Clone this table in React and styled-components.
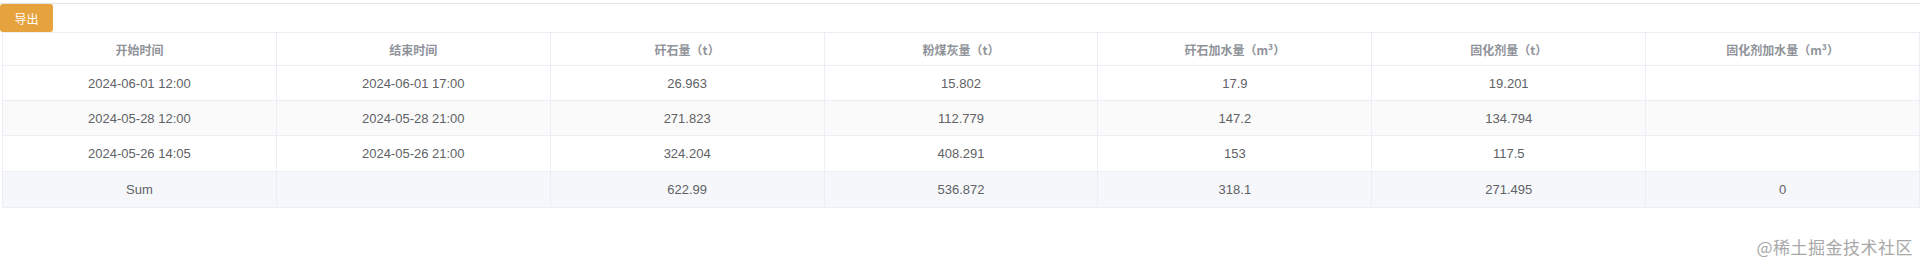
import React from "react";
import styled, { createGlobalStyle } from "styled-components";

const columns = [
  "开始时间",
  "结束时间",
  "矸石量（t）",
  "粉煤灰量（t）",
  "矸石加水量（m³）",
  "固化剂量（t）",
  "固化剂加水量（m³）",
];

const rows = [
  ["2024-06-01 12:00", "2024-06-01 17:00", "26.963", "15.802", "17.9", "19.201", ""],
  ["2024-05-28 12:00", "2024-05-28 21:00", "271.823", "112.779", "147.2", "134.794", ""],
  ["2024-05-26 14:05", "2024-05-26 21:00", "324.204", "408.291", "153", "117.5", ""],
];

const sum = ["Sum", "", "622.99", "536.872", "318.1", "271.495", "0"];

export default function App() {
  return (
    <>
      <GlobalStyle />
      <Page>
        <Toolbar>
          <ExportBtn>导出</ExportBtn>
        </Toolbar>
        <Table>
          <HeadRow>
            {columns.map((c) => (
              <HeadCell key={c}>{c}</HeadCell>
            ))}
          </HeadRow>
          {rows.map((r, i) => (
            <Row key={i} striped={i % 2 === 1} h={i === 2 ? 36 : 35}>
              {r.map((v, j) => (
                <Cell key={j}>{v}</Cell>
              ))}
            </Row>
          ))}
          <SumRow h={36}>
            {sum.map((v, j) => (
              <Cell key={j}>{v}</Cell>
            ))}
          </SumRow>
        </Table>
        <Watermark>@稀土掘金技术社区</Watermark>
      </Page>
    </>
  );
}

const GlobalStyle = createGlobalStyle`
  body {
    margin: 0;
    background: #fff;
    font-family: "Liberation Sans", "Noto Sans CJK SC", sans-serif;
  }
  * {
    box-sizing: border-box;
  }
`;

const Page = styled.div`
  position: relative;
  width: 1920px;
  height: 266px;
  padding-top: 3px;
  overflow: hidden;
`;

const Toolbar = styled.div`
  border-top: 1px solid #e4e4e4;
  display: flex;
`;

const ExportBtn = styled.button`
  width: 53px;
  height: 28px;
  border: none;
  border-radius: 3px;
  background: #e6a23c;
  color: #fff;
  font-size: 12px;
  font-family: "Noto Sans CJK SC", sans-serif;
  padding: 0;
  margin: 0;
`;

const Table = styled.div`
  margin-left: 2px;
  border-left: 1px solid #ebeef5;
  display: flex;
  flex-direction: column;
`;

const HeadRow = styled.div`
  display: grid;
  grid-template-columns: repeat(7, 1fr);
  height: 34px;
  border-top: 1px solid #ebeef5;
  border-bottom: 1px solid #ebeef5;
`;

const HeadCell = styled.div`
  display: flex;
  align-items: center;
  justify-content: center;
  border-right: 1px solid #ebeef5;
  color: #909399;
  font-weight: bold;
  font-size: 12px;
  font-family: "Noto Sans CJK SC", sans-serif;
`;

const Row = styled.div`
  display: grid;
  grid-template-columns: repeat(7, 1fr);
  height: ${(p) => p.h}px;
  border-bottom: 1px solid #ebeef5;
  background: ${(p) => (p.striped ? "#fafafa" : "#fff")};
`;

const SumRow = styled(Row)`
  background: #f5f7fa;
`;

const Cell = styled.div`
  display: flex;
  align-items: center;
  justify-content: center;
  border-right: 1px solid #ebeef5;
  color: #606266;
  font-size: 13px;
`;

const Watermark = styled.div`
  position: absolute;
  right: 7px;
  bottom: 7px;
  color: #a8a8a8;
  font-size: 17px;
  font-family: "Noto Sans CJK SC", serif;
  letter-spacing: 0.5px;
`;
